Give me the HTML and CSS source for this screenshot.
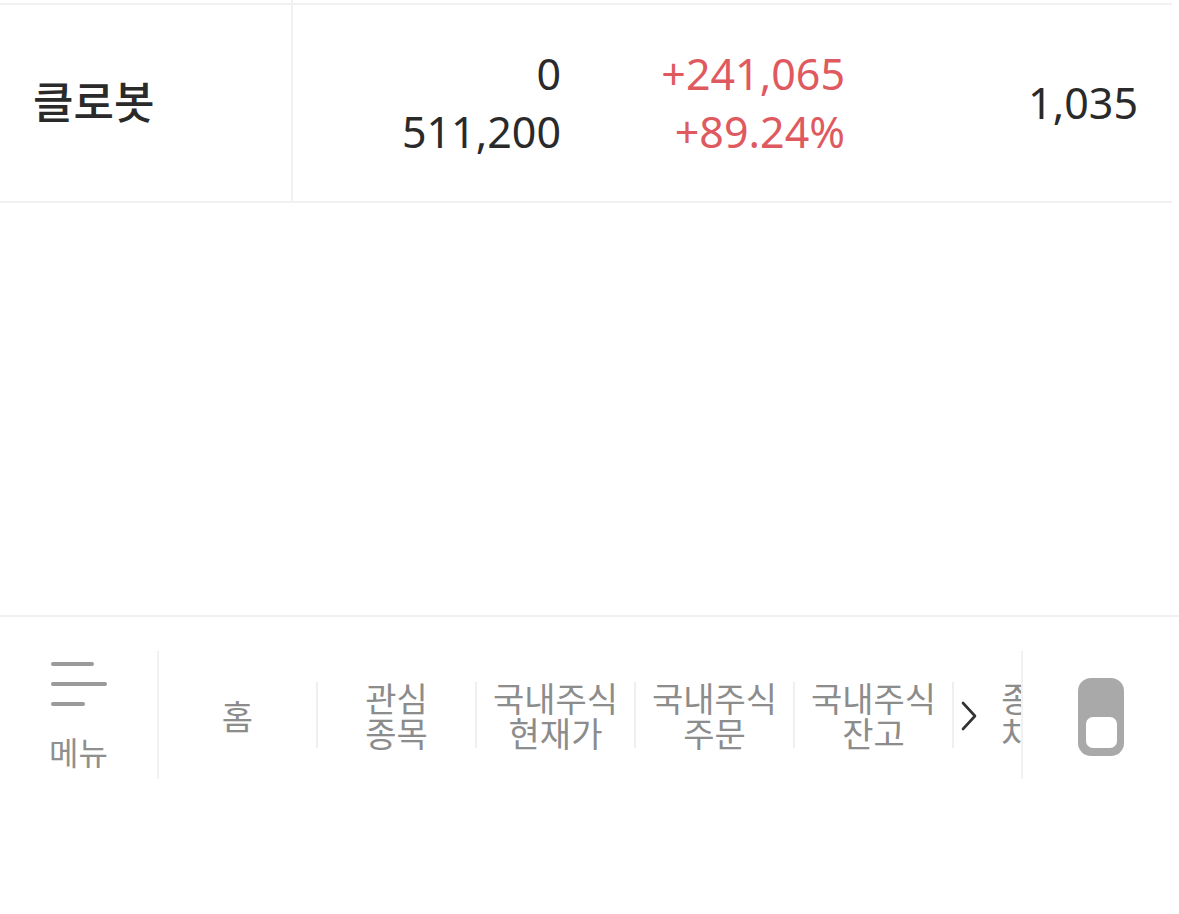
FILE: index.html
```html
<!DOCTYPE html>
<html lang="ko">
<head>
<meta charset="utf-8">
<title>잔고</title>
<link rel="stylesheet" href="styles.css">
</head>
<body>
<div class="page">
  <div class="table">
    <div class="row row-prev">
      <div class="cell cell-name"></div>
      <div class="cell"></div>
      <div class="cell"></div>
      <div class="cell"></div>
    </div>
    <div class="row row-main">
      <div class="cell cell-name"><span class="name">클로봇</span></div>
      <div class="cell cell-num cell-qty">
        <span>0</span>
        <span>511,200</span>
      </div>
      <div class="cell cell-num cell-pl up">
        <span>+241,065</span>
        <span>+89.24%</span>
      </div>
      <div class="cell cell-num cell-last">
        <span>1,035</span>
      </div>
    </div>
  </div>

  <div class="spacer"></div>

  <nav class="bottom-nav">
    <div class="nav-bar">
      <div class="menu">
        <svg class="menu-icon" width="56" height="44" viewBox="0 0 56 44" aria-hidden="true">
          <line x1="2" y1="2" x2="41" y2="2"/>
          <line x1="2" y1="22" x2="54" y2="22"/>
          <line x1="2" y1="42" x2="32" y2="42"/>
        </svg>
        <span class="menu-label">메뉴</span>
      </div>
      <div class="scroller">
        <div class="items">
          <div class="item"><span class="item-label">홈</span></div>
          <div class="item"><span class="item-label">관심<br>종목</span></div>
          <div class="item"><span class="item-label">국내주식<br>현재가</span></div>
          <div class="item"><span class="item-label">국내주식<br>주문</span></div>
          <div class="item"><span class="item-label">국내주식<br>잔고</span></div>
          <div class="item"><span class="item-label">종합<br>차트</span></div>
        </div>
        <svg class="more-arrow" width="16" height="30" viewBox="0 0 16 30" aria-hidden="true">
          <polyline points="2,2 14,15 2,28"/>
        </svg>
      </div>
      <div class="switch">
        <svg width="46" height="78" viewBox="0 0 46 78" aria-hidden="true">
          <rect x="0" y="0" width="46" height="78" rx="13" fill="#a9a9a9"/>
          <rect x="8" y="39" width="31" height="31" rx="7" fill="#ffffff"/>
        </svg>
      </div>
    </div>
  </nav>
</div>
</body>
</html>
```

FILE: styles.css
```css
* {
  box-sizing: border-box;
}

html, body {
  margin: 0;
  padding: 0;
  background: #ffffff;
}

body {
  font-family: "Noto Sans", "Noto Sans CJK KR", sans-serif;
  color: #2a2a2a;
}

.page {
  width: 1179px;
  height: 914px;
  display: flex;
  flex-direction: column;
  overflow: hidden;
}

/* ---------- table ---------- */
.table {
  width: 1172px;
}

.row {
  display: grid;
  grid-template-columns: 293px 1fr 1fr 1fr;
  border-bottom: 2px solid #f0f1f3;
}

.row-prev {
  height: 5px;
}

.row-main {
  height: 198px;
}

.cell {
  display: flex;
  flex-direction: column;
  justify-content: center;
}

.cell-name {
  border-right: 2px solid #f0f1f3;
  padding-left: 33px;
}

.name {
  font-family: "Noto Sans CJK KR", sans-serif;
  font-size: 44px;
  font-weight: 500;
  color: #2a2a2a;
  line-height: 1;
  margin-bottom: 7px;
}

.cell-num {
  align-items: flex-end;
  font-size: 43px;
  line-height: 58px;
  padding-right: 34px;
  color: #2a2a2a;
}

.cell-qty {
  padding-right: 25px;
}

.cell-last {
  padding-right: 34px;
}

.up {
  color: #df5a5f;
}

/* ---------- bottom nav ---------- */
.spacer {
  flex: 1;
}

.bottom-nav {
  height: 299px;
  border-top: 2px solid #f1f1f3;
  padding-top: 34px;
}

.nav-bar {
  height: 128px;
  display: flex;
}

.menu {
  width: 159px;
  border-right: 2px solid #f0f1f3;
  display: flex;
  flex-direction: column;
  align-items: center;
  justify-content: center;
}

.menu-icon {
  display: block;
  margin-left: 1px;
  margin-bottom: 2px;
}

.menu-icon line {
  stroke: #9a9a9a;
  stroke-width: 4;
  stroke-linecap: round;
}

.menu-label {
  font-family: "Noto Sans CJK KR", sans-serif;
  font-size: 32px;
  line-height: 34px;
  color: #8f8f8f;
  margin-top: 26px;
}

.scroller {
  width: 864px;
  border-right: 2px solid #f0f1f3;
  overflow: hidden;
  position: relative;
}

.items {
  display: flex;
  height: 100%;
  align-items: center;
}

.item {
  flex: 0 0 159px;
  height: 66px;
  border-right: 2px solid #eeeff1;
  display: flex;
  align-items: center;
  justify-content: center;
  font-family: "Noto Sans CJK KR", sans-serif;
  font-size: 34px;
  line-height: 35px;
  color: #8c8c8c;
  text-align: center;
  white-space: nowrap;
}

.item-label {
  display: block;
}

.more-arrow {
  position: absolute;
  left: 802px;
  top: 50px;
}

.more-arrow polyline {
  fill: none;
  stroke: #333333;
  stroke-width: 2.6;
  stroke-linecap: round;
  stroke-linejoin: round;
}

.switch {
  flex: 1;
  display: flex;
  align-items: center;
  justify-content: center;
  padding-top: 3px;
}

.switch svg {
  display: block;
}
```
